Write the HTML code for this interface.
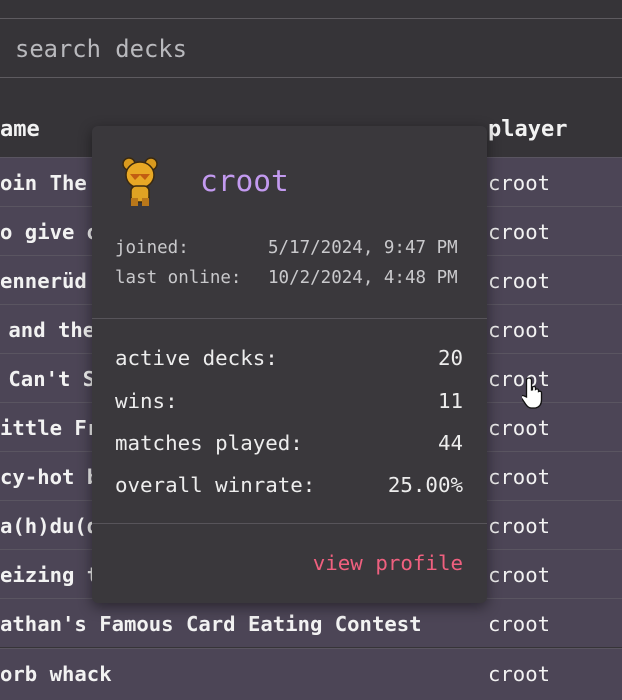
<!DOCTYPE html>
<html><head><meta charset="utf-8"><style>
body{margin:0;width:622px;height:699px;overflow:hidden;background:#363438;font-family:"DejaVu Sans Mono","Liberation Mono",monospace;color:#f2f2f2;position:relative}
.hl{position:absolute;left:0;width:622px;height:1px;background:#5e5b60}
.search{position:absolute;left:15px;top:35px;font-size:23.8px;color:#b9b9bd}
.hdr{position:absolute;top:117px;font-size:22px;font-weight:bold}
.row{position:absolute;left:0;width:622px;height:48px;background:#4c4556;border-top:1px solid #5a5561}
.row .n{position:absolute;left:0;top:13px;font-size:20.6px;font-weight:bold;white-space:pre}
.row .p{position:absolute;left:488px;top:13px;font-size:20.6px}
.pop{position:absolute;left:92px;top:126px;width:395px;height:477px;background:#3a383c;border-radius:6px;box-shadow:0 4px 14px rgba(0,0,0,.45)}
.pop .name{position:absolute;left:108px;top:38px;font-size:29.5px;color:#c39af0}
.sm{position:absolute;font-size:17.5px;color:#c9c9cc}
.div{position:absolute;left:0;width:395px;height:1px;background:#57545a}
.st{position:absolute;left:23px;width:348px;font-size:20.8px;color:#ededed}
.st span{float:right}
.vp{position:absolute;right:24px;top:425px;font-size:20.8px;color:#f0607f}
</style></head><body>
<div class="hl" style="top:18px"></div>
<div class="search">search decks</div>
<div class="hl" style="top:77px"></div>
<div class="hdr" style="left:0">ame</div>
<div class="hdr" style="left:488px">player</div>

<div class="row" style="top:157px"><div class="n">oin The</div><div class="p">croot</div></div>
<div class="row" style="top:206px"><div class="n">o give o</div><div class="p">croot</div></div>
<div class="row" style="top:255px"><div class="n">ennerüd</div><div class="p">croot</div></div>
<div class="row" style="top:304px"><div class="n" style="left:-4px"> and the</div><div class="p">croot</div></div>
<div class="row" style="top:353px"><div class="n" style="left:-4px"> Can't S</div><div class="p">croot</div></div>
<div class="row" style="top:402px"><div class="n">ittle Fr</div><div class="p">croot</div></div>
<div class="row" style="top:451px"><div class="n">cy-hot b</div><div class="p">croot</div></div>
<div class="row" style="top:500px"><div class="n">a(h)du(d</div><div class="p">croot</div></div>
<div class="row" style="top:549px"><div class="n">eizing t</div><div class="p">croot</div></div>
<div class="row" style="top:598px"><div class="n">athan's Famous Card Eating Contest</div><div class="p">croot</div></div>
<div class="row" style="top:648px;height:51px"><div class="n">orb whack</div><div class="p">croot</div></div>

<svg style="position:absolute;left:522px;top:376px" width="28" height="34" viewBox="0 0 28 34"><path d="M7 2c1.5 0 2.5 1 2.5 2.5V14l1-.2V11c1.5-1 3-.5 3 1v1.5c1.5-1 3-.5 3 1v1c1.5-.8 3 0 3 1.2V24c0 4-2 7-6 8h-4c-3 0-4.5-2-6-4l-4-6c-1-1.5.5-3 2-2.3L4.5 21V4.5C4.5 3 5.5 2 7 2z" fill="#fff" stroke="#111" stroke-width="1.3"/></svg>

<div class="pop">
<svg style="position:absolute;left:30px;top:30px" width="36" height="52" viewBox="0 0 36 52">
<circle cx="7" cy="8" r="6" fill="#d99a1e" stroke="#3a2a10" stroke-width="1.5"/>
<circle cx="29" cy="8" r="6" fill="#d99a1e" stroke="#3a2a10" stroke-width="1.5"/>
<ellipse cx="18" cy="19" rx="14" ry="13" fill="#e8a825" stroke="#3a2a10" stroke-width="1.5"/>
<path d="M8 18l5 6 5-5 5 5 5-6" fill="#c25d12"/>
<rect x="9" y="30" width="18" height="16" rx="5" fill="#e0a323" stroke="#3a2a10" stroke-width="1.5"/>
<rect x="9" y="42" width="7" height="8" fill="#b8771a"/><rect x="20" y="42" width="7" height="8" fill="#b8771a"/>
</svg>
<div class="name">croot</div>
<div class="sm" style="left:23px;top:112px">joined:</div>
<div class="sm" style="left:176px;top:112px">5/17/2024, 9:47 PM</div>
<div class="sm" style="left:23px;top:142px">last online:</div>
<div class="sm" style="left:176px;top:142px">10/2/2024, 4:48 PM</div>
<div class="div" style="top:192px"></div>
<div class="st" style="top:220px">active decks:<span>20</span></div>
<div class="st" style="top:263px">wins:<span>11</span></div>
<div class="st" style="top:305px">matches played:<span>44</span></div>
<div class="st" style="top:347px">overall winrate:<span>25.00%</span></div>
<div class="div" style="top:397px"></div>
<div class="vp">view profile</div>
</div>
</body></html>
